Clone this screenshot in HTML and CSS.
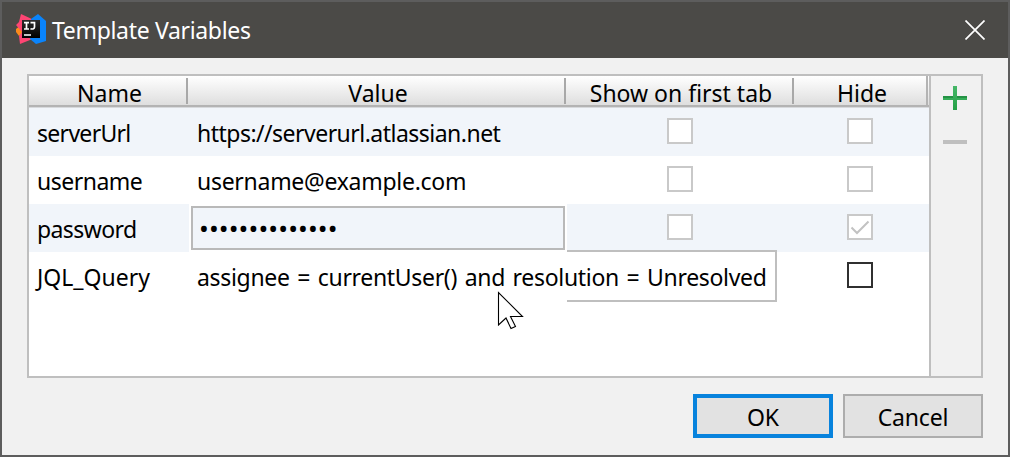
FILE: index.html
```html
<!DOCTYPE html>
<html lang="en">
<head>
<meta charset="utf-8">
<title>Template Variables</title>
<link rel="stylesheet" href="styles.css">
</head>
<body>
<div class="window">
  <header class="titlebar">
    <svg class="logo" width="32" height="32" viewBox="0 0 32 32">
      <defs>
        <linearGradient id="dark" x1="0" y1="0" x2="0" y2="1"><stop offset="0" stop-color="#2b2b2b"/><stop offset="1" stop-color="#000"/></linearGradient>
      </defs>
      <path d="M0 15 5 11 7 19 3 22 0 18z" fill="#fc8a1c"/>
      <path d="M5 0 18 6 24 22 4 30 3 22 6 18 0 11 3 8z" fill="#fe4573"/>
      <path d="M15 5 22 0 30 7V27L20 30 14 25z" fill="#0a84fb"/>
      <rect x="6" y="6" width="18" height="18" fill="url(#dark)"/>
      <path d="M8 8.700h5M10.500 8.700v6.500M8 15h5M14.500 8.700h4v4.300q0 2.500-4 1.900M8 21h7" fill="none" stroke="#fff" stroke-width="1.700"/>
    </svg>
    <h1 class="title">Template Variables</h1>
    <svg class="close" width="20" height="20" viewBox="0 0 20 20"><path d="M.5.5 19.500 19.500M19.500.5.5 19.500" stroke="#fff" stroke-width="1.700"/></svg>
  </header>
  <main class="content">
    <div class="panel">
      <div class="table">
        <div class="row head">
          <div class="th"><span class="t-name">Name</span></div>
          <div class="th"><span class="t-value">Value</span></div>
          <div class="th"><span class="t-show">Show on first tab</span></div>
          <div class="th"><span class="t-hide">Hide</span></div>
        </div>
        <div class="row odd">
          <div class="td"><span class="t-server">serverUrl</span></div>
          <div class="td"><span class="t-url">https://serverurl.atlassian.net</span></div>
          <div class="td check"><i class="box"></i></div>
          <div class="td check"><i class="box"></i></div>
        </div>
        <div class="row">
          <div class="td"><span class="t-user">username</span></div>
          <div class="td"><span class="t-mail">username@example.com</span></div>
          <div class="td check"><i class="box"></i></div>
          <div class="td check"><i class="box"></i></div>
        </div>
        <div class="row odd">
          <div class="td"><span class="t-pass">password</span></div>
          <div class="td editing"><div class="field"><span class="dots">••••••••••••••</span></div></div>
          <div class="td check"><i class="box"></i></div>
          <div class="td check"><i class="box"><svg width="22" height="22" viewBox="0 0 22 22"><path d="M2.500 11.500 8 17 19.500 5.500" fill="none" stroke="#c2c2c2" stroke-width="2"/></svg></i></div>
        </div>
        <div class="row last">
          <div class="td"><span class="t-jql">JQL_Query</span></div>
          <div class="td"><div class="expand"></div><span class="t-query">assignee = currentUser() and resolution = Unresolved</span></div>
          <div class="td check"></div>
          <div class="td check"><i class="box active"></i></div>
        </div>
      </div>
      <div class="tools">
        <svg width="24" height="24" viewBox="0 0 24 24"><defs><linearGradient id="green" x1="0" y1="0" x2="0" y2="1"><stop offset="0" stop-color="#46b768"/><stop offset="1" stop-color="#24a046"/></linearGradient></defs><path d="M0 10h24v4H0z" fill="#259245"/><path d="M0 12h24v2H0z" fill="#36ad58"/><path d="M10 0h4v24h-4z" fill="url(#green)"/></svg>
        <i class="minus"></i>
      </div>
    </div>
    <footer class="buttons">
      <button class="btn ok"><span class="t-ok">OK</span></button>
      <button class="btn"><span class="t-cancel">Cancel</span></button>
    </footer>
  </main>
  <svg class="cursor" width="28" height="40" viewBox="0 0 28 40"><path d="M1.500 1.500V34L9 27 14 37.500 18.500 35.500 13.500 25.500H25.500z" fill="#fff" stroke="#000" stroke-width="1.100"/></svg>
</div>
</body>
</html>
```
FILE: styles.css
```css
* { box-sizing: border-box; }
body { margin: 0; }
.window {
  position: relative;
  width: 1010px;
  height: 457px;
  border: 2px solid #5d5d5d;
  background: #f1f1f1;
  font: 23px/30px "Noto Sans", sans-serif;
  color: #000;
  overflow: hidden;
}
.titlebar {
  display: flex;
  align-items: center;
  height: 56px;
  padding: 0 23px 0 14px;
  background: #4b4a47;
  color: #fff;
}
.logo { margin-right: 4px; }
.title { margin: 0; font-size: 23px; font-weight: 400; letter-spacing: -0.33px; white-space: nowrap; }
.close { margin-left: auto; }
.content { padding: 16px 25px 0; }
.panel {
  display: flex;
  height: 304px;
  border: 2px solid #bfbfbf;
}
.table { width: 900px; background: #fff; }
.row {
  display: grid;
  grid-template-columns: 160px 378px 228px 134px;
  height: 48px;
}
.head {
  height: 32px;
  padding-bottom: 3px;
  background: linear-gradient(#fff, #dedede 29px, #b3b3b3 29px, #b3b3b3 31px, #d7d9dc 31px);
}
.th {
  height: 26px;
  margin: 2px 1px 0 -1px;
  padding-left: 3px;
  border-right: 2px solid #a8a8a8;
  text-align: center;
  line-height: 30px;
  white-space: nowrap;
}
.th:last-child { height: 29px; margin-top: 0; border-color: #b3b3b3; line-height: 34px; }
.t-name { padding-left: 2px; }
.t-value, .t-show, .t-hide { padding-left: 1px; }
.odd { background: #f1f5fa; }
.td { padding: 10px 0 0 8px; white-space: nowrap; }
.td.check { padding: 10px 0 0; }
.check:nth-child(3) { padding-left: 100px; }
.check:nth-child(4) { padding-left: 52px; }
.t-server { letter-spacing: -0.7px; }
.t-url { letter-spacing: -0.52px; }
.t-user { letter-spacing: -0.5px; }
.t-mail { letter-spacing: -0.28px; }
.t-pass { letter-spacing: -0.6px; }
.t-query { letter-spacing: -0.32px; word-spacing: 2px; }
.box {
  display: block;
  width: 26px;
  height: 26px;
  border: 2px solid #c9c9c9;
  background: #fff;
}
.box svg { display: block; }
.box.active { border-color: #303030; }
.td.editing { padding: 2px; background: #fff; }
.field {
  height: 44px;
  width: 374px;
  border: 2px solid #b9b9b9;
  background: #f1f5fa;
  padding: 5px 0 0 6px;
}
.dots { font-size: 26px; letter-spacing: 0.13px; }
.last .td { position: relative; }
.last span { position: relative; }
.expand {
  position: absolute;
  left: 378px;
  top: -2px;
  width: 210px;
  height: 52px;
  border: 2px solid #bfbfbf;
  border-left: 0;
  background: #fff;
}
.tools {
  width: 52px;
  border-left: 2px solid #bfbfbf;
  padding: 10px 0 0 12px;
}
.tools svg { display: block; }
.minus { display: block; width: 24px; height: 4px; margin-top: 30px; background: #bfbfbf; }
.buttons { display: flex; justify-content: flex-end; gap: 10px; margin-top: 16px; }
.btn {
  width: 140px;
  height: 44px;
  padding: 1px 0 0;
  border: 2px solid #adadad;
  background: #e2e2e2;
  color: #000;
  font: inherit;
}
.ok { border: 4px solid #0883dd; }
.t-cancel { letter-spacing: -0.15px; }
.cursor { position: absolute; left: 495px; top: 289px; }
```
